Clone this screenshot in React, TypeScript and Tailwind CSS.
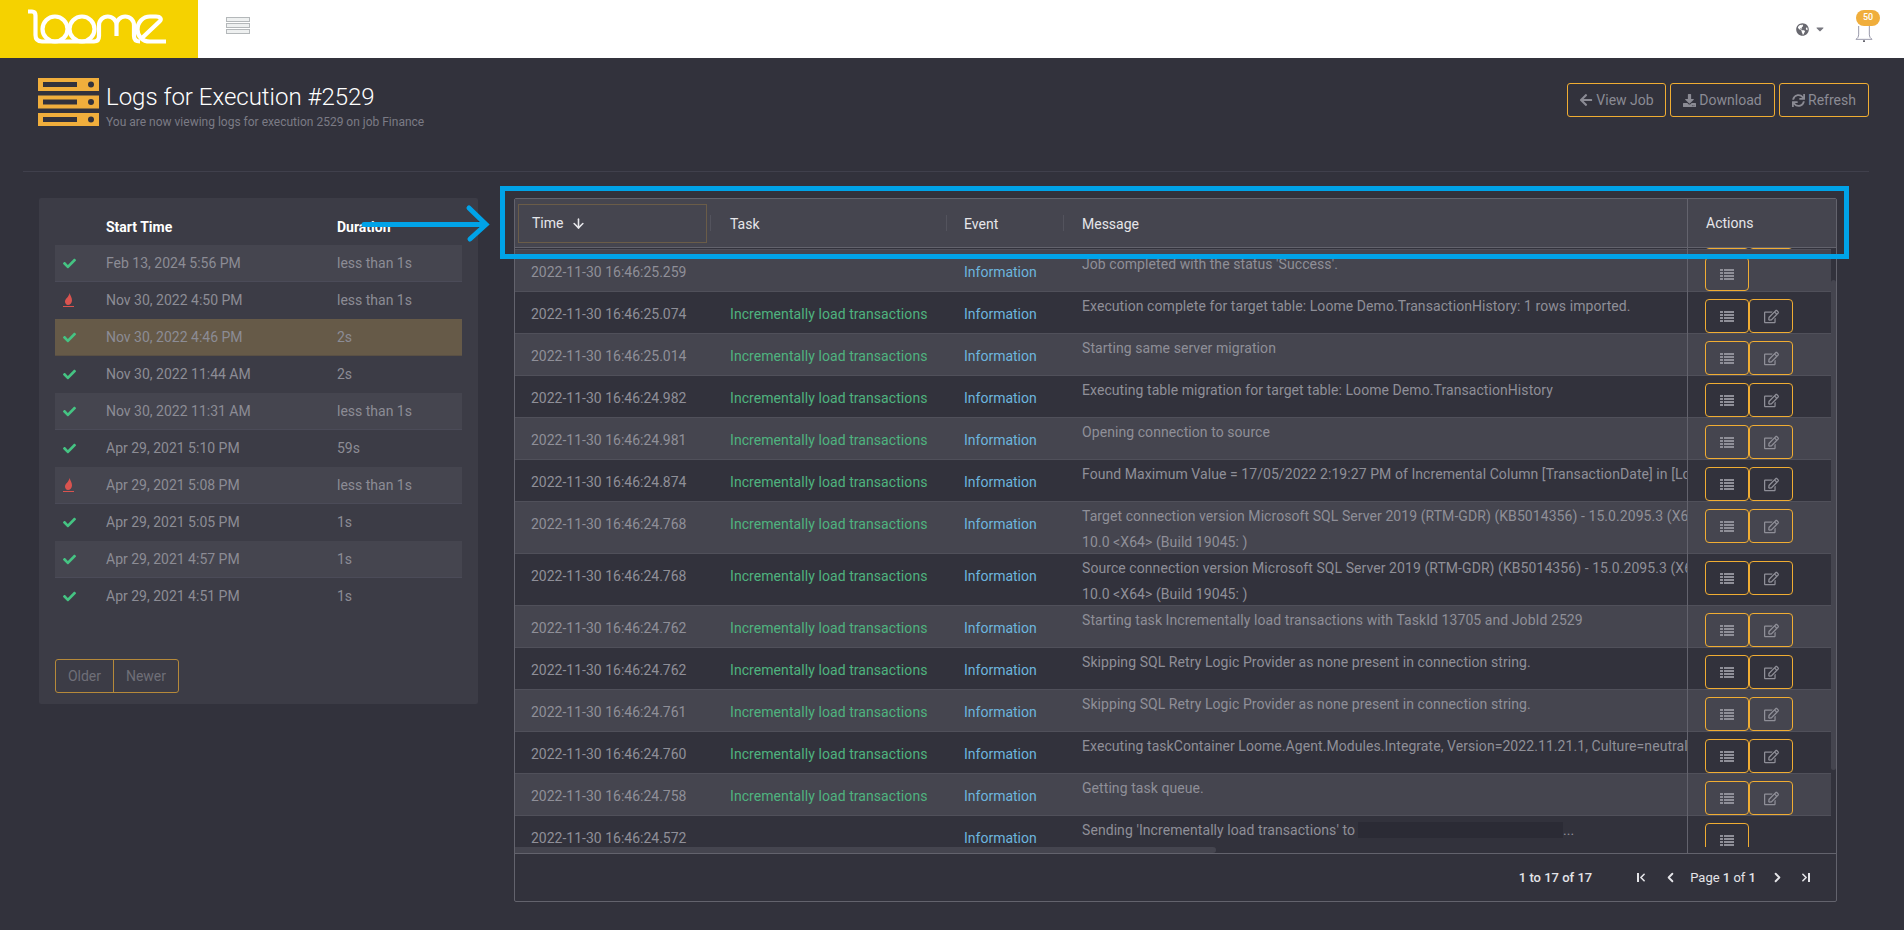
import { ArrowDown, ChevronLeft, ChevronRight } from "lucide-react";
import {
  FaArrowLeft,
  FaCaretDown,
  FaCheck,
  FaDownload,
  FaGlobeAmericas,
  FaRegEdit,
  FaSync,
} from "react-icons/fa";

const TASK = "Incrementally load transactions";

const executions = [
  { start: "Feb 13, 2024 5:56 PM", duration: "less than 1s", ok: true },
  { start: "Nov 30, 2022 4:50 PM", duration: "less than 1s", ok: false },
  { start: "Nov 30, 2022 4:46 PM", duration: "2s", ok: true, selected: true },
  { start: "Nov 30, 2022 11:44 AM", duration: "2s", ok: true },
  { start: "Nov 30, 2022 11:31 AM", duration: "less than 1s", ok: true },
  { start: "Apr 29, 2021 5:10 PM", duration: "59s", ok: true },
  { start: "Apr 29, 2021 5:08 PM", duration: "less than 1s", ok: false },
  { start: "Apr 29, 2021 5:05 PM", duration: "1s", ok: true },
  { start: "Apr 29, 2021 4:57 PM", duration: "1s", ok: true },
  { start: "Apr 29, 2021 4:51 PM", duration: "1s", ok: true },
];

interface LogRow {
  time: string;
  task?: string;
  message: string;
  second?: string;
  single?: boolean;
}

const logs: LogRow[] = [
  { time: "2022-11-30 16:46:25.300", message: "" },
  { time: "2022-11-30 16:46:25.259", message: "Job completed with the status 'Success'.", single: true },
  { time: "2022-11-30 16:46:25.074", task: TASK, message: "Execution complete for target table: Loome Demo.TransactionHistory: 1 rows imported." },
  { time: "2022-11-30 16:46:25.014", task: TASK, message: "Starting same server migration" },
  { time: "2022-11-30 16:46:24.982", task: TASK, message: "Executing table migration for target table: Loome Demo.TransactionHistory" },
  { time: "2022-11-30 16:46:24.981", task: TASK, message: "Opening connection to source" },
  { time: "2022-11-30 16:46:24.874", task: TASK, message: "Found Maximum Value = 17/05/2022 2:19:27 PM of Incremental Column [TransactionDate] in [Loome Demo].[TransactionHistory]" },
  { time: "2022-11-30 16:46:24.768", task: TASK, message: "Target connection version Microsoft SQL Server 2019 (RTM-GDR) (KB5014356) - 15.0.2095.3 (X64)", second: "10.0 <X64> (Build 19045: )" },
  { time: "2022-11-30 16:46:24.768", task: TASK, message: "Source connection version Microsoft SQL Server 2019 (RTM-GDR) (KB5014356) - 15.0.2095.3 (X64)", second: "10.0 <X64> (Build 19045: )" },
  { time: "2022-11-30 16:46:24.762", task: TASK, message: "Starting task Incrementally load transactions with TaskId 13705 and JobId 2529" },
  { time: "2022-11-30 16:46:24.762", task: TASK, message: "Skipping SQL Retry Logic Provider as none present in connection string." },
  { time: "2022-11-30 16:46:24.761", task: TASK, message: "Skipping SQL Retry Logic Provider as none present in connection string." },
  { time: "2022-11-30 16:46:24.760", task: TASK, message: "Executing taskContainer Loome.Agent.Modules.Integrate, Version=2022.11.21.1, Culture=neutral, PublicKeyToken=null" },
  { time: "2022-11-30 16:46:24.758", task: TASK, message: "Getting task queue." },
  { time: "2022-11-30 16:46:24.572", message: "Sending 'Incrementally load transactions' to", single: true },
];

function LoomeLogo() {
  return (
    <svg width="198" height="58" viewBox="0 0 198 58" fill="none" stroke="#fff" strokeWidth="4.200">
      <path d="M28 11.500H32Q35.500 11.500 35.500 15.500V35Q35.500 41.500 42 41.500H94Q99 41.500 99 36V25.250A8.750 8.750 0 0 1 116.500 25.250V36M116.500 25.250A8.750 8.750 0 0 1 134 25.250V36Q134 41.500 140 41.500" />
      <circle cx="55" cy="29" r="12.500" />
      <circle cx="82" cy="29" r="12.500" />
      <path d="M166 41.500H150C142 41.500 137.500 36 137.500 29.500C137.500 22 143 16.500 150 16.500H156C160.500 16.500 162 19 159.500 21.500L142 38" />
    </svg>
  );
}

function ServerIcon() {
  return (
    <svg width="61" height="48" viewBox="0 0 61 48">
      {[0, 17.500, 35].map((y) => (
        <g key={y}>
          <rect x="0" y={y} width="61" height="13" fill="#f0ae3c" />
          <rect x="5" y={y + 4} width="34" height="5" fill="#32323c" />
          <circle cx="53" cy={y + 6.500} r="3" fill="#32323c" />
        </g>
      ))}
    </svg>
  );
}

function FireIcon() {
  return (
    <svg width="12" height="14" viewBox="0 0 12 14">
      <path d="M6.500 0C7.500 3 9 4.500 9 7.500C9 10 7 12 5 12C3 12 2 10 2 8.500C2 5.500 6 4 6.500 0Z" fill="#d9534f" />
      <rect x="0" y="13" width="11" height="1" fill="#d9534f" />
    </svg>
  );
}

function ListIcon() {
  return (
    <svg width="14" height="11" viewBox="0 0 14 11" fill="currentColor">
      {[0, 3, 6, 9].map((y) => (
        <g key={y}>
          <rect x="0" y={y} width="3" height="2" />
          <rect x="4" y={y} width="10" height="2" />
        </g>
      ))}
    </svg>
  );
}

function FirstIcon() {
  return (
    <span className="flex w-[10px] items-center text-[#e4e4e8]">
      <span className="h-[9px] w-[2px] shrink-0 bg-[#e4e4e8]" />
      <ChevronLeft size={13} strokeWidth={3} className="-ml-[3px] shrink-0" />
    </span>
  );
}

function LastIcon() {
  return (
    <span className="flex w-[10px] items-center justify-end text-[#e4e4e8]">
      <ChevronRight size={13} strokeWidth={3} className="-mr-[3px] shrink-0" />
      <span className="h-[9px] w-[2px] shrink-0 bg-[#e4e4e8]" />
    </span>
  );
}

function TopButton({ icon, label, w }: { icon: React.ReactNode; label: string; w: string }) {
  return (
    <button className={`flex h-[34px] items-center justify-center gap-[3px] rounded-[3px] border border-[#f0ad33] text-[14px] text-[#8b8b94] ${w}`}>
      {icon}
      {label}
    </button>
  );
}

function ActionButton({ children }: { children: React.ReactNode }) {
  return (
    <button className="flex h-[34px] w-[44px] items-center justify-center rounded-[4px] border border-[#f0ad33] text-[#8f8f98]">
      {children}
    </button>
  );
}

function ExecutionsPanel() {
  return (
    <div className="w-[439px] shrink-0 rounded-[2px] bg-[#3c3c46] px-[16px] pb-[11px]">
      <div className="flex h-[47px] items-center pt-[11px] text-[14px] font-bold text-white">
        <span className="ml-[51px] w-[231px]">Start Time</span>
        <span>Duration</span>
      </div>
      {executions.map((e, i) => (
        <div
          key={e.start}
          className={`flex h-[37px] items-center border-b text-[14px] text-[#8c8c95] ${
            e.selected
              ? "border-[#5a5044] bg-[#665a48]"
              : i % 2 === 0
                ? "border-[#4b4b58] bg-[#45454f]"
                : "border-transparent"
          }`}
        >
          <span className="flex w-[51px] pl-[8px]">
            {e.ok ? <FaCheck size={13} className="text-[#45c483]" /> : <FireIcon />}
          </span>
          <span className="w-[231px]">{e.start}</span>
          <span>{e.duration}</span>
        </div>
      ))}
      <div className="mt-[44px] flex h-[34px] w-[124px] rounded-[3px] border border-[#b5893a] text-[14px] text-[#6f6f78]">
        <span className="flex w-[58px] items-center justify-center border-r border-[#b5893a]">Older</span>
        <span className="flex flex-1 items-center justify-center">Newer</span>
      </div>
    </div>
  );
}

function LogsTable() {
  return (
    <div className="flex h-[704px] w-[1323px] shrink-0 flex-col overflow-hidden rounded-[2px] border border-[#63636d]">
      {/* Header */}
      <div className="flex h-[49px] shrink-0 items-center border-b border-[#63636d] bg-[#45454f] text-[14px] text-[#e6e6ea]">
        <div className="flex w-[195px] shrink-0 px-[3px]">
          <div className="flex h-[39px] flex-1 items-center gap-[8px] border border-[#6a5c48] pl-[13px] pt-[1px]">
            Time
            <ArrowDown size={15} strokeWidth={2.500} />
          </div>
        </div>
        <span className="h-[16px] w-px bg-[#53535d]" />
        <div className="w-[235px] shrink-0 pl-[19px] pt-[2px]">Task</div>
        <span className="h-[16px] w-px bg-[#53535d]" />
        <div className="w-[116px] shrink-0 pl-[17px] pt-[2px]">Event</div>
        <span className="h-[16px] w-px bg-[#53535d]" />
        <div className="flex-1 pl-[18px] pt-[2px]">Message</div>
        <div className="flex h-full w-[149px] shrink-0 items-center border-l border-[#63636d] pl-[18px] pt-[1px]">Actions</div>
      </div>

      {/* Body */}
      <div className="flex min-h-0 flex-1">
        <div className="flex min-w-0 flex-1 flex-col">
          <div className="flex min-h-0 flex-1 overflow-hidden">
            <div className="min-w-0 flex-1">
              <div className="-mt-[40px]">
                {logs.map((r, i) => (
                  <div
                    key={i}
                    className={`flex overflow-hidden border-b border-[#50505a] text-[14px] text-[#8f8f98] ${
                      r.second ? "h-[52px]" : "h-[42px]"
                    } ${i % 2 === 1 ? "bg-[#45454f]" : "bg-[#32323c]"}`}
                  >
                    <div className="w-[199px] shrink-0 pl-[16px] leading-[44px]">{r.time}</div>
                    <div className="w-[234px] shrink-0 pl-[16px] leading-[44px] tracking-[0.07px] text-[#4fb37f]">{r.task}</div>
                    <div className="w-[118px] shrink-0 pl-[16px] leading-[44px] text-[#6db5de]">Information</div>
                    <div className="min-w-0 flex-1 overflow-hidden whitespace-nowrap pl-[16px] pt-[1px] leading-[26px] tracking-[0.07px]">
                      <div className="flex items-center">
                        {r.message}
                        {i === logs.length - 1 && (
                          <>
                            <span className="ml-[3px] h-[16px] w-[205px] bg-[#2b2b35]" />
                            ...
                          </>
                        )}
                      </div>
                      {r.second && <div>{r.second}</div>}
                    </div>
                  </div>
                ))}
              </div>
            </div>
            <div className="w-[144px] shrink-0 border-l border-[#63636d]">
              <div className="-mt-[40px]">
                {logs.map((r, i) => (
                  <div
                    key={i}
                    className={`flex gap-0 border-b border-[#50505a] pl-[17px] pt-[7px] ${
                      r.second ? "h-[52px]" : "h-[42px]"
                    } ${i % 2 === 1 ? "bg-[#45454f]" : "bg-[#32323c]"}`}
                  >
                    <ActionButton>
                      <ListIcon />
                    </ActionButton>
                    {!r.single && (
                      <ActionButton>
                        <FaRegEdit size={15} />
                      </ActionButton>
                    )}
                  </div>
                ))}
              </div>
            </div>
          </div>
          {/* Horizontal scrollbar */}
          <div className="flex h-[6px] shrink-0">
            <div className="h-full w-[701px] rounded-r-[3px] bg-[#45454f]" />
            <div className="ml-auto h-full w-[144px] border-l border-[#63636d]" />
          </div>
        </div>
        {/* Vertical scrollbar */}
        <div className="w-[5px] shrink-0 pt-[32px]">
          <div className="h-[490px] rounded-[3px] bg-[#45454f]" />
        </div>
      </div>

      {/* Footer */}
      <div className="flex h-[48px] shrink-0 items-center justify-end border-t border-[#63636d] pr-[26px] text-[13px] text-[#e4e4e8]">
        <span className="font-medium">1 to 17 of 17</span>
        <span className="ml-[45px]">
          <FirstIcon />
        </span>
        <ChevronLeft size={15} strokeWidth={3} className="ml-[16px]" />
        <span className="ml-[12px]">
          Page <b className="font-medium">1</b> of <b className="font-medium">1</b>
        </span>
        <ChevronRight size={15} strokeWidth={3} className="ml-[14px]" />
        <span className="ml-[15px]">
          <LastIcon />
        </span>
      </div>
    </div>
  );
}

export default function App() {
  return (
    <div className="relative h-screen overflow-hidden bg-[#32323c] font-['Roboto',sans-serif]">
      {/* Top nav */}
      <nav className="flex h-[58px] items-center bg-white">
        <div className="h-full w-[198px] bg-[#f5d200]">
          <LoomeLogo />
        </div>
        <div className="mb-[7px] ml-[28px] flex w-[24px] flex-col gap-px">
          <span className="h-[5px] border border-[#b4b8ba] bg-[#eef0f0]" />
          <span className="h-[5px] border border-[#b4b8ba] bg-[#eef0f0]" />
          <span className="h-[5px] border border-[#b4b8ba] bg-[#eef0f0]" />
        </div>
        <div className="ml-auto flex items-center pr-[26px]">
          <FaGlobeAmericas size={13} className="text-[#68686f]" />
          <FaCaretDown size={12} className="ml-[5px] text-[#77777f]" />
          <div className="relative ml-[28px] h-[40px] w-[24px]">
            <svg width="18" height="16" viewBox="0 0 20 18" fill="none" stroke="#8d8da0" className="absolute left-[1px] top-[17px]">
              <path d="M4 0V10Q4 13 1 15H19Q16 13 16 10V0" />
              <path d="M9 17H11" stroke="#55555f" strokeWidth="2" />
            </svg>
            <span className="absolute left-[2px] top-[1px] flex h-[16px] w-[24px] items-center justify-center rounded-[8px] bg-[#f0ae3c] text-[9px] font-medium text-white">
              50
            </span>
          </div>
        </div>
      </nav>

      {/* Page heading */}
      <div className="flex h-[113px] justify-between pl-[38px] pr-[35px] pt-[20px]">
        <div className="flex">
          <ServerIcon />
          <div className="ml-[7px] pt-[5px]">
            <h1 className="text-[24px] font-light leading-[28px] text-white">Logs for Execution #2529</h1>
            <p className="mt-[3px] text-[12px] leading-[16px] text-[#7b7b85]">
              You are now viewing logs for execution 2529 on job Finance
            </p>
          </div>
        </div>
        <div className="mt-[5px] flex gap-[4px]">
          <TopButton icon={<FaArrowLeft size={14} />} label="View Job" w="w-[99px]" />
          <TopButton icon={<FaDownload size={13} />} label="Download" w="w-[105px]" />
          <TopButton icon={<FaSync size={13} />} label="Refresh" w="w-[90px]" />
        </div>
      </div>
      <div className="ml-[23px] mr-[35px] h-px bg-[#40404c]" />

      {/* Main */}
      <div className="mt-[26px] flex items-start gap-[36px] pl-[39px]">
        <ExecutionsPanel />
        <LogsTable />
      </div>

      {/* Annotation drawn over the page */}
      <div className="absolute left-[500px] top-[186px] h-[73px] w-[1349px] border-[5px] border-[#00a3e8]" />
      <svg className="absolute left-[360px] top-[204px]" width="132" height="40" viewBox="0 0 132 40" fill="none" stroke="#00a3e8" strokeWidth="5" strokeLinecap="round">
        <path d="M4 20.500H125" />
        <path d="M109 4L126 20.500L110 35" />
      </svg>
    </div>
  );
}
